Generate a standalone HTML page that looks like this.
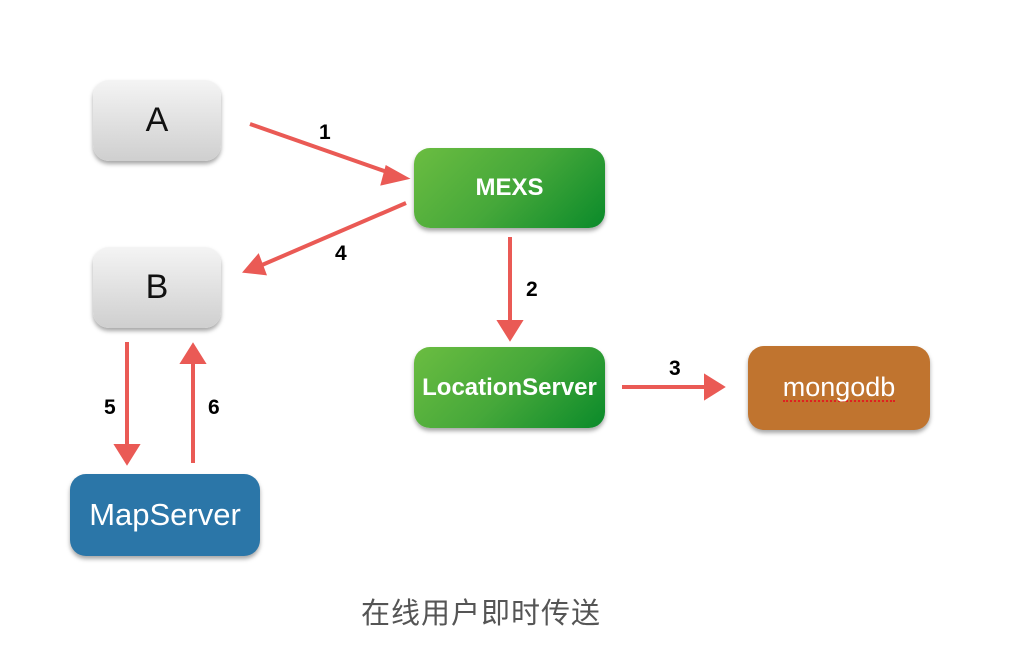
<!DOCTYPE html>
<html><head><meta charset="utf-8"><style>
body{margin:0;width:1028px;height:652px;background:#fff;position:relative;overflow:hidden;font-family:"Liberation Sans",sans-serif}
.b{position:absolute;display:flex;align-items:center;justify-content:center;border-radius:16px;box-shadow:0 3px 4px rgba(0,0,0,.35)}
.g{background:linear-gradient(180deg,#f4f4f4,#cfcfcf);color:#111;font-size:34px}
.gr{background:linear-gradient(135deg,#6bbd41,#46a83a 50%,#0a8a2a);color:#fff;font-weight:bold;font-size:24px}
.n{position:absolute;font-weight:bold;font-size:21px;color:#000}
</style></head><body>
<div class="b g" style="left:93px;top:80px;width:128px;height:81px">A</div>
<div class="b g" style="left:93px;top:247px;width:128px;height:81px">B</div>
<div class="b gr" style="left:414px;top:148px;width:191px;height:80px">MEXS</div>
<div class="b gr" style="left:414px;top:347px;width:191px;height:81px">LocationServer</div>
<div class="b" style="left:748px;top:346px;width:182px;height:84px;background:#c0742f;color:#fff;font-size:27px"><span style="border-bottom:2px dotted #e02020;line-height:26px">mongodb</span></div>
<div class="b" style="left:70px;top:474px;width:190px;height:82px;background:#2b76a8;color:#fff;font-size:31px">MapServer</div>
<svg width="1028" height="652" style="position:absolute;left:0;top:0">
<g stroke="#ea5a55" stroke-width="4" fill="#ea5a55">
<line x1="250" y1="124" x2="390" y2="173"/><polygon points="405,178 387,168 383,183"/>
<line x1="406" y1="203" x2="262" y2="265"/><polygon points="246,271 258,257 264,273"/>
<line x1="510" y1="237" x2="510" y2="322"/><polygon points="510,338 500,322 520,322"/>
<line x1="622" y1="387" x2="706" y2="387"/><polygon points="722,387 706,377 706,397"/>
<line x1="127" y1="342" x2="127" y2="446"/><polygon points="127,462 117,446 137,446"/>
<line x1="193" y1="463" x2="193" y2="362"/><polygon points="193,346 183,362 203,362"/>
</g></svg>
<div class="n" style="left:319px;top:121px">1</div>
<div class="n" style="left:335px;top:242px">4</div>
<div class="n" style="left:526px;top:278px">2</div>
<div class="n" style="left:669px;top:357px">3</div>
<div class="n" style="left:104px;top:396px">5</div>
<div class="n" style="left:208px;top:396px">6</div>
<div style="position:absolute;left:361px;top:590px;font-size:29px;color:#555;font-family:'Liberation Sans','Noto Sans CJK SC',sans-serif;letter-spacing:1px">在线用户即时传送</div>
</body></html>
